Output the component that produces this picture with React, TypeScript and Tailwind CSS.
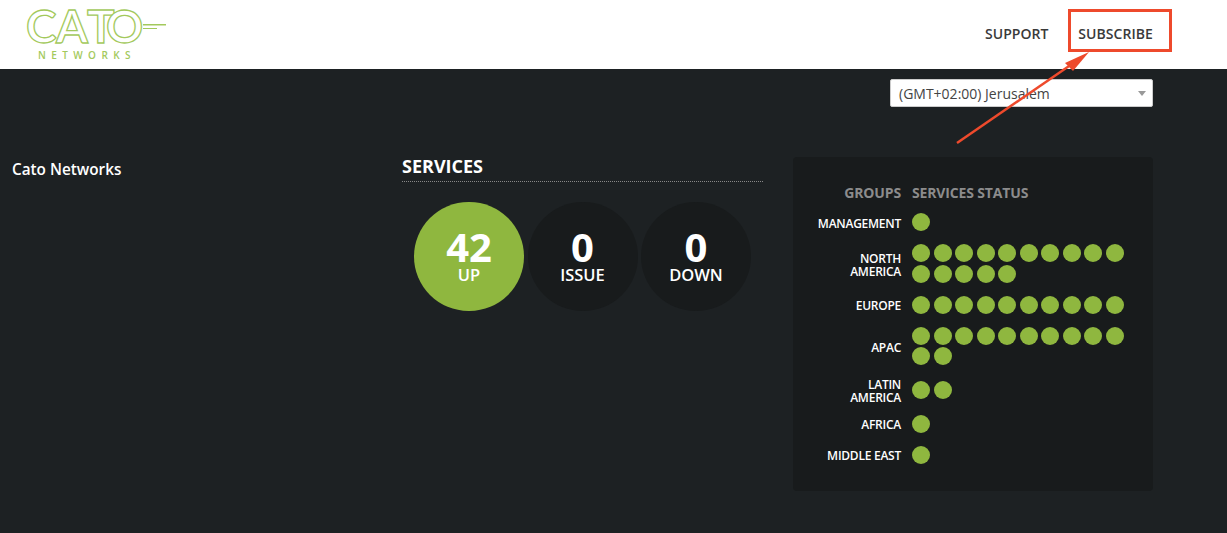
const groups: { name: string[]; count: number }[] = [
  { name: ['MANAGEMENT'], count: 1 },
  { name: ['NORTH', 'AMERICA'], count: 15 },
  { name: ['EUROPE'], count: 10 },
  { name: ['APAC'], count: 12 },
  { name: ['LATIN', 'AMERICA'], count: 2 },
  { name: ['AFRICA'], count: 1 },
  { name: ['MIDDLE EAST'], count: 1 },
]

const stats = [
  { value: '42', label: 'UP', bg: 'bg-[#8fb73f]' },
  { value: '0', label: 'ISSUE', bg: 'bg-[#181b1c]' },
  { value: '0', label: 'DOWN', bg: 'bg-[#181b1c]' },
]

function Logo() {
  return (
    <div className="ml-[27px] flex flex-col items-start">
      <svg width="140" height="48" viewBox="27 0 140 48" className="block overflow-visible">
        <text
          x="26 56 87 106"
          y="43"
          fontFamily="Lato, sans-serif"
          fontSize="46"
          fontWeight="700"
          fill="#ffffff"
          stroke="#a3c95c"
          strokeWidth="1.3"
        >
          CATO
        </text>
        <rect x="143" y="24" width="23" height="1.5" fill="#a3c95c" />
        <rect x="143" y="28" width="14" height="1" fill="#a3c95c" />
      </svg>
      <div className="mt-[1px] ml-[11px] text-[10px] leading-[12px] font-semibold tracking-[5.4px] text-[#a3c95c]">NETWORKS</div>
    </div>
  )
}

export default function App() {
  return (
    <div className="relative h-[533px] overflow-hidden bg-[#1d2123] font-['Open_Sans',sans-serif]">
      <header className="flex h-[69px] items-start justify-between bg-white">
        <Logo />
        <nav className="flex gap-[29.5px] pt-[24px] pr-[74px] text-[14px] leading-[20px] font-semibold tracking-[0.08px] text-[#3a3a3a]">
          <span>SUPPORT</span>
          <span>SUBSCRIBE</span>
        </nav>
      </header>

      <div className="flex justify-end pt-[10px] pr-[74px]">
        <div className="flex h-[28px] w-[263px] items-center justify-between rounded-[2px] border border-[#ccc] bg-white pr-[6px] pl-[8px] text-[14px] text-[#444]">
          <span>(GMT+02:00) Jerusalem</span>
          <span className="h-0 w-0 border-x-[4px] border-t-[5px] border-x-transparent border-t-[#999]" />
        </div>
      </div>

      <div className="mt-[50px] flex">
        <div className="w-[402px] pt-[2px] pl-3 text-[15.3px] leading-[20px] font-semibold text-white">Cato Networks</div>

        <div className="w-[361px]">
          <h2 className="h-[25px] border-b border-dotted border-[#888] text-[18px] leading-[18px] font-bold text-white">SERVICES</h2>
          <div className="mt-[20px] flex gap-[3.5px] pl-[12px]">
            {stats.map(s => (
              <div key={s.label} className={`flex h-[109px] w-[110px] flex-col items-center rounded-full pt-[25px] text-white ${s.bg}`}>
                <div className="text-[40px] leading-[40px] font-bold">{s.value}</div>
                <div className="text-[16.5px] leading-[16px] font-semibold">{s.label}</div>
              </div>
            ))}
          </div>
        </div>

        <div className="ml-[30px] h-[334px] w-[360px] rounded-[4px] bg-[#181b1c] pt-[27px]">
          <div className="flex text-[14px] leading-[18px] font-bold tracking-[-0.15px] text-[#8c8c8c]">
            <div className="w-[108px] text-right">GROUPS</div>
            <div className="ml-[11px]">SERVICES STATUS</div>
          </div>
          <div className="mt-[11px] flex flex-col gap-[10.5px]">
            {groups.map(g => (
              <div key={g.name[0]} className="flex items-center">
                <div className="w-[108px] text-right text-[12px] leading-[13px] font-semibold tracking-[-0.25px] text-white">
                  {g.name.map(line => (
                    <div key={line}>{line}</div>
                  ))}
                </div>
                <div className="ml-[11px] flex w-[225px] flex-wrap gap-x-[3.5px]">
                  {Array.from({ length: g.count }, (_, i) => (
                    <span key={i} className="mb-[2.5px] h-[18px] w-[18px] rounded-full bg-[#8fb73f]" />
                  ))}
                </div>
              </div>
            ))}
          </div>
        </div>
      </div>

      {/* annotation drawn over the page */}
      <div className="absolute top-[9px] left-[1068px] h-[43px] w-[104px] border-[3px] border-[#ee4a2c]" />
      <svg className="absolute top-0 left-0" width="1227" height="533">
        <line x1="957" y1="143" x2="1072" y2="64" stroke="#ee4a2c" strokeWidth="2.5" />
        <polygon points="1089,52 1065,63 1073,71" fill="#ee4a2c" />
      </svg>
    </div>
  )
}
